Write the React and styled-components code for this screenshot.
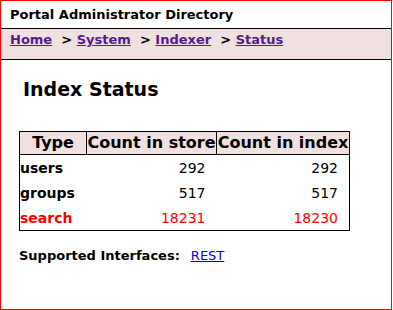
import React from 'react';
import styled, { createGlobalStyle } from 'styled-components';

const GlobalStyle = createGlobalStyle`
  body {
    margin: 0;
    font-family: "DejaVu Sans", Verdana, sans-serif;
    background: #fff;
  }
`;

const Frame = styled.div`
  box-sizing: border-box;
  width: 392px;
  height: 310px;
  border: 1px solid #ff0000;
  color: #000;
`;

const Title = styled.div`
  height: 27px;
  border-bottom: 1px solid #000;
  padding-left: 9px;
  font-size: 13px;
  font-weight: bold;
  line-height: 27px;
`;

const Crumbs = styled.div`
  height: 30px;
  border-bottom: 1px solid #000;
  background: #f0e0e0;
  padding-left: 9px;
  font-size: 13px;
  font-weight: bold;
  line-height: 22px;
  white-space: pre;
`;

const Crumb = styled.a`
  color: #551a8b;
  text-decoration: underline;
  cursor: pointer;
`;

const Content = styled.div`
  padding: 0 18px;
`;

const Heading = styled.h2`
  margin: 17px 0 30px 4px;
  font-size: 19px;
  font-weight: bold;
  line-height: 24px;
`;

const Table = styled.table`
  border-collapse: collapse;
  border: 1px solid #000;
  font-size: 14px;
`;

const HeadCell = styled.th`
  width: ${p => p.$w}px;
  height: 22px;
  padding: 0;
  border: 1px solid #000;
  background: #f0e0e0;
  font-size: 16px;
  font-weight: bold;
  text-align: center;
  white-space: nowrap;
  line-height: 22px;
`;

const Cell = styled.td`
  height: 25px;
  padding: 0 ${p => (p.$num ? '11px' : '0')} 0 0;
  text-align: ${p => (p.$num ? 'right' : 'left')};
  font-weight: ${p => (p.$num ? 'normal' : 'bold')};
  color: ${p => (p.$alert ? '#ff0000' : '#000')};
  white-space: nowrap;
`;

const Interfaces = styled.div`
  margin-top: 17px;
  font-size: 13px;
  font-weight: bold;
  display: flex;
  gap: 11px;
`;

const RestLink = styled.a`
  color: #0000ee;
  font-weight: normal;
  text-decoration: underline;
  cursor: pointer;
`;

const rows = [
  { type: 'users', store: 292, index: 292 },
  { type: 'groups', store: 517, index: 517 },
  { type: 'search', store: 18231, index: 18230 },
];

export default function App() {
  return (
    <>
      <GlobalStyle />
      <Frame>
        <Title>Portal Administrator Directory</Title>
        <Crumbs>
          <Crumb>Home</Crumb>{'  > '}<Crumb>System</Crumb>{'  > '}<Crumb>Indexer</Crumb>{'  > '}<Crumb>Status</Crumb>
        </Crumbs>
        <Content>
          <Heading>Index Status</Heading>
          <Table>
            <thead>
              <tr>
                <HeadCell $w={66}>Type</HeadCell>
                <HeadCell $w={129}>Count in store</HeadCell>
                <HeadCell $w={132}>Count in index</HeadCell>
              </tr>
            </thead>
            <tbody>
              {rows.map(r => {
                const alert = r.store !== r.index;
                return (
                  <tr key={r.type}>
                    <Cell $alert={alert}>{r.type}</Cell>
                    <Cell $num $alert={alert}>{r.store}</Cell>
                    <Cell $num $alert={alert}>{r.index}</Cell>
                  </tr>
                );
              })}
            </tbody>
          </Table>
          <Interfaces>
            <span>Supported Interfaces:</span>
            <RestLink>REST</RestLink>
          </Interfaces>
        </Content>
      </Frame>
    </>
  );
}
